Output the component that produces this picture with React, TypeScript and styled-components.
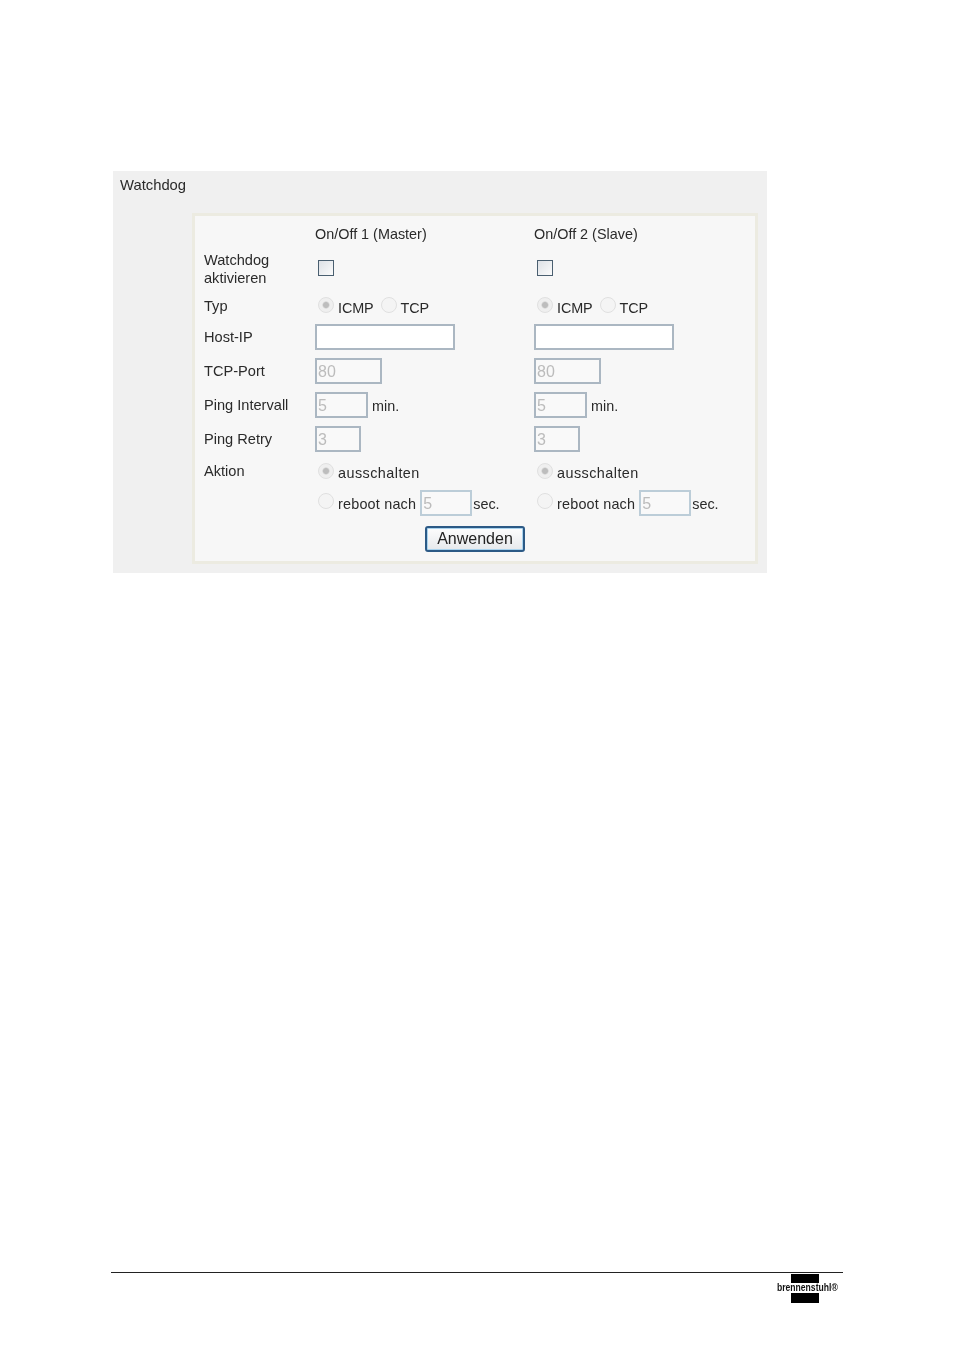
import React from "react";
import styled, { createGlobalStyle } from "styled-components";

const GlobalStyle = createGlobalStyle`
  html, body {
    margin: 0;
    background: #fff;
  }
  body {
    font-family: "Liberation Sans", Arial, sans-serif;
    color: #2a2a2a;
  }
`;

const Page = styled.div`
  width: 954px;
  height: 1350px;
  padding: 171px 0 0 111px;
  box-sizing: border-box;
  overflow: hidden;
`;

const Panel = styled.section`
  width: 654px;
  height: 402px;
  margin-left: 2px;
  background: #f0f0f0;
  box-sizing: border-box;
  padding: 7px 9px 9px 7px;
  display: flex;
  flex-direction: column;
  filter: blur(0.4px);
`;

const PanelTitle = styled.h2`
  margin: 0 0 20px;
  height: 15px;
  line-height: 15px;
  font-size: 14.8px;
  font-weight: normal;
`;

const FormBox = styled.div`
  margin-left: 72px;
  width: 566px;
  height: 351px;
  box-sizing: border-box;
  background: #f7f7f7;
  border: 3px solid #ecebe1;
  padding: 8px 9px 0;
`;

const FormGrid = styled.div`
  display: grid;
  grid-template-columns: 111px 219px 1fr;
  grid-template-rows: 20px 34px 22px repeat(4, 26px) 22px 26px auto;
  row-gap: 8px;
  align-items: center;
  font-size: 14.4px;
`;

const Label = styled.div<{ $drop?: number }>`
  line-height: 18px;
  font-size: 14.6px;
  padding-top: ${({ $drop }) => $drop ?? 0}px;
`;

const Cell = styled.div`
  display: flex;
  align-items: center;
  white-space: nowrap;
`;

const CheckBox = styled.input.attrs({ type: "checkbox" })`
  appearance: none;
  width: 16px;
  height: 16px;
  margin: 0 0 3px 3px;
  box-sizing: border-box;
  border: 1.5px solid #4a5f70;
  background: linear-gradient(135deg, #dde1e6, #fbfbfb);
`;

const Radio = styled.input.attrs({ type: "radio", disabled: true })<{ $lift?: number }>`
  appearance: none;
  flex: none;
  width: 16px;
  height: 16px;
  margin: 0 4px ${({ $lift }) => $lift ?? 0}px 3px;
  box-sizing: border-box;
  border-radius: 50%;
  border: 1px solid #e0e0e0;
  background: #f4f4f4;
  &:checked {
    background: radial-gradient(circle, #bdbdbd 0 2.5px, #efefef 4px);
  }
`;

const OptionText = styled.span<{ $gap?: number; $drop?: number; $track?: number }>`
  padding-top: ${({ $drop }) => $drop ?? 2}px;
  margin-right: ${({ $gap }) => $gap ?? 0}px;
  letter-spacing: ${({ $track }) => $track ?? 0}px;
`;

const TextField = styled.input<{ $width: number; $soft?: boolean }>`
  width: ${({ $width }) => $width}px;
  height: 26px;
  box-sizing: border-box;
  margin: 0;
  padding: 2px 1px 0;
  border: 2px solid ${({ $soft }) => ($soft ? "#bccdd8" : "#abb7c2")};
  background: #fff;
  font-family: inherit;
  font-size: 16px;
  color: #bcbcbc;
  outline: none;
  &:disabled {
    background: #f9f9f9;
    color: #bcbcbc;
  }
`;

const Unit = styled.span<{ $left: number }>`
  margin-left: ${({ $left }) => $left}px;
  padding-top: 2px;
`;

const ButtonRow = styled.div`
  grid-column: 1 / -1;
  display: flex;
  justify-content: center;
  margin-top: 2px;
`;

const ApplyButton = styled.button`
  width: 100px;
  height: 26px;
  box-sizing: border-box;
  padding: 0;
  border: 2px solid #2c5a86;
  border-radius: 3px;
  background: linear-gradient(#fdfdfd, #e6e9ec);
  box-shadow: inset 0 0 0 1px #a9d3ee;
  font-family: inherit;
  font-size: 16px;
  color: #222;
`;

const Footer = styled.footer`
  width: 732px;
  margin-top: 699px;
  border-top: 1px solid #222;
  padding: 1px 5px 0 0;
  box-sizing: border-box;
  display: flex;
  justify-content: flex-end;
`;

const Logo = styled.div`
  width: 61px;
  display: flex;
  flex-direction: column;
  align-items: center;
`;

const LogoBar = styled.div<{ $height: number }>`
  width: 28px;
  height: ${({ $height }) => $height}px;
  margin-right: 5px;
  background: #000;
`;

const LogoText = styled.div`
  height: 10px;
  line-height: 10px;
  font-size: 10px;
  font-weight: bold;
  color: #111;
  white-space: nowrap;
  transform: scaleX(0.86);
`;

type Channel = { title: string; key: string };

const channels: Channel[] = [
  { title: "On/Off 1 (Master)", key: "a" },
  { title: "On/Off 2 (Slave)", key: "b" },
];

export default function App() {
  return (
    <Page>
      <GlobalStyle />
      <Panel>
        <PanelTitle>Watchdog</PanelTitle>
        <FormBox>
          <FormGrid>
            <Label />
            {channels.map((c) => (
              <Cell key={c.key}>{c.title}</Cell>
            ))}

            <Label>
              Watchdog
              <br />
              aktivieren
            </Label>
            {channels.map((c) => (
              <Cell key={c.key}>
                <CheckBox readOnly />
              </Cell>
            ))}

            <Label $drop={1}>Typ</Label>
            {channels.map((c) => (
              <Cell key={c.key}>
                <Radio name={`typ-${c.key}`} defaultChecked />
                <OptionText $gap={4} $drop={5} $track={-0.1}>ICMP</OptionText>
                <Radio name={`typ-${c.key}`} />
                <OptionText $drop={5} $track={-0.1}>TCP</OptionText>
              </Cell>
            ))}

            <Label>Host-IP</Label>
            {channels.map((c) => (
              <Cell key={c.key}>
                <TextField $width={140} />
              </Cell>
            ))}

            <Label>TCP-Port</Label>
            {channels.map((c) => (
              <Cell key={c.key}>
                <TextField $width={67} disabled defaultValue="80" />
              </Cell>
            ))}

            <Label>Ping Intervall</Label>
            {channels.map((c) => (
              <Cell key={c.key}>
                <TextField $width={53} disabled defaultValue="5" />
                <Unit $left={4}>min.</Unit>
              </Cell>
            ))}

            <Label>Ping Retry</Label>
            {channels.map((c) => (
              <Cell key={c.key}>
                <TextField $width={46} disabled defaultValue="3" />
              </Cell>
            ))}

            <Label>Aktion</Label>
            {channels.map((c) => (
              <Cell key={c.key}>
                <Radio name={`aktion-${c.key}`} defaultChecked />
                <OptionText $drop={4} $track={0.45}>ausschalten</OptionText>
              </Cell>
            ))}

            <Label />
            {channels.map((c) => (
              <Cell key={c.key}>
                <Radio name={`aktion-${c.key}`} $lift={4} />
                <OptionText $gap={4} $track={0.2}>reboot nach</OptionText>
                <TextField $width={52} $soft disabled defaultValue="5" />
                <Unit $left={1}>sec.</Unit>
              </Cell>
            ))}

            <ButtonRow>
              <ApplyButton>Anwenden</ApplyButton>
            </ButtonRow>
          </FormGrid>
        </FormBox>
      </Panel>
      <Footer>
        <Logo>
          <LogoBar $height={9} />
          <LogoText>brennenstuhl®</LogoText>
          <LogoBar $height={10} />
        </Logo>
      </Footer>
    </Page>
  );
}
